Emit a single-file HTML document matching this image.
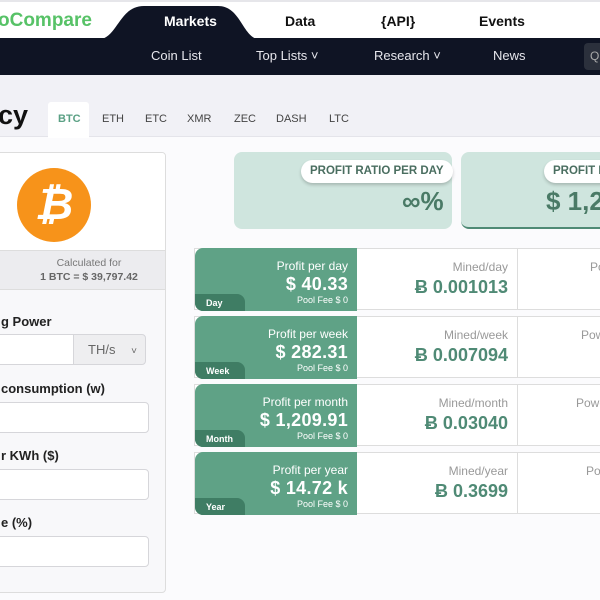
<!DOCTYPE html>
<html><head><meta charset="utf-8"><style>
*{box-sizing:border-box;margin:0;padding:0}
body{width:600px;height:600px;overflow:hidden;position:relative;background:#fbfbfd;font-family:"Liberation Sans",sans-serif}
.a{position:absolute;white-space:nowrap}
.top{left:0;top:0;width:600px;height:40px;background:#fff;border-top:2px solid #e6e6ea}
.nav{left:0;top:38px;width:600px;height:37px;background:#0f1424}
.navt{color:#fff;font-weight:bold;font-size:14px;top:13px}
.sub{color:#e6e6ec;font-size:13px;top:48px}
.gray{left:0;top:75px;width:600px;height:62px;background:#f1f1f6;border-bottom:1px solid #e4e4ea}
.tab{top:113px;font-size:11px;color:#444}
.card{left:-5px;top:152px;width:171px;height:441px;border:1px solid #ddd;border-radius:4px;background:#f8f8fa;overflow:hidden}
.lbl{font-weight:bold;font-size:13px;color:#222}
.inp{background:#fff;border:1px solid #d6d6da;border-radius:4px;height:31px}
.tc{top:152px;height:77px;background:#cfe5de;border-radius:8px}
.pill{background:#fff;border-radius:12px;box-shadow:0 2px 3px rgba(0,0,0,.2);font-weight:bold;font-size:11.5px;color:#4a6e60;padding:5px 9px;height:23px}
.row{left:194px;width:420px;height:62px;background:#fff;border:1px solid #ddd}
.g{left:0;top:-1px;width:162px;height:63px;background:#5fa286;border-radius:8px 0 0 8px;color:#fff;text-align:right;padding-right:9px}
.g .t{font-size:12px;margin-top:11px}
.g .v{font-size:18px;font-weight:bold;margin-top:1px;letter-spacing:.3px}
.g .f{font-size:9px;margin-top:0}
.tag{left:0;bottom:0;width:50px;height:17px;background:#3f7d64;border-radius:0 8px 0 8px;font-size:9px;font-weight:bold;padding:4px 0 0 11px;text-align:left}
.c2{left:162px;top:0;width:161px;height:60px;border-right:1px solid #ddd;text-align:right;padding-right:9px}
.c2 .t{font-size:12px;color:#999;margin-top:11px}
.c2 .v{font-size:18px;font-weight:bold;color:#4f8a75;margin-top:3px}
.c3{left:323px;top:11px;font-size:12px;color:#999}
</style></head><body>
<div class="a top"></div>
<div class="a" style="left:-2px;top:10px;font-size:19px;font-weight:bold;color:#57c267">oCompare</div>
<div class="a nav"></div>
<svg class="a" style="left:96px;top:4px" width="170" height="36"><path d="M0 36 C22 36 22 2 48 2 L122 2 C146 2 146 36 166 36 Z" fill="#0f1424"/></svg>
<div class="a navt" style="left:164px">Markets</div>
<div class="a navt" style="left:285px;color:#111">Data</div>
<div class="a navt" style="left:381px;color:#111">{API}</div>
<div class="a navt" style="left:479px;color:#111">Events</div>
<div class="a sub" style="left:151px">Coin List</div>
<div class="a sub" style="left:256px">Top Lists ˅</div>
<div class="a sub" style="left:374px">Research ˅</div>
<div class="a sub" style="left:493px">News</div>
<div class="a" style="left:584px;top:43px;width:30px;height:27px;background:#2b303c;border-radius:4px;color:#aaa;font-size:12px;padding:6px 0 0 6px">Q</div>
<div class="a gray"></div>
<div class="a" style="left:-2px;top:100px;font-size:27px;font-weight:bold;color:#111">cy</div>
<div class="a" style="left:48px;top:102px;width:41px;height:36px;background:#fff;border-radius:3px 3px 0 0"></div>
<div class="a tab" style="left:58px;color:#5aa084;font-weight:bold">BTC</div>
<div class="a tab" style="left:102px">ETH</div>
<div class="a tab" style="left:145px">ETC</div>
<div class="a tab" style="left:187px">XMR</div>
<div class="a tab" style="left:234px">ZEC</div>
<div class="a tab" style="left:276px">DASH</div>
<div class="a tab" style="left:329px">LTC</div>

<div class="a card">
 <div class="a" style="left:0;top:0;width:171px;height:98px;background:#fff;border-bottom:1px solid #ddd"></div>
 <div class="a" style="left:21px;top:15px;width:74px;height:74px;border-radius:50%;background:#f7931a;color:#fff;font-size:44px;font-weight:bold;text-align:center;line-height:74px;font-style:italic">₿</div>
 <div class="a" style="left:0;top:98px;width:171px;height:39px;background:#ececef;border-bottom:1px solid #ddd;text-align:center;font-size:10.5px;color:#777;padding:5px 0 0 15px;line-height:14px">Calculated for<br><b style="color:#666">1 BTC = $ 39,797.42</b></div>
 <div class="a lbl" style="left:5px;top:161px">g Power</div>
 <div class="a inp" style="left:-5px;top:181px;width:83px;border-radius:0"></div>
 <div class="a" style="left:77px;top:181px;width:73px;height:31px;background:#eeeef0;border:1px solid #d6d6da;border-radius:0 4px 4px 0;font-size:13px;color:#666;padding:7px 0 0 14px">TH/s <span style="margin-left:12px;font-size:10px">˅</span></div>
 <div class="a lbl" style="left:5px;top:228px">consumption (w)</div>
 <div class="a inp" style="left:-5px;top:249px;width:158px"></div>
 <div class="a lbl" style="left:5px;top:295px">r KWh ($)</div>
 <div class="a inp" style="left:-5px;top:316px;width:158px"></div>
 <div class="a lbl" style="left:5px;top:362px">e (%)</div>
 <div class="a inp" style="left:-5px;top:383px;width:158px"></div>
</div>

<div class="a tc" style="left:234px;width:218px"></div>
<div class="a pill" style="left:301px;top:160px">PROFIT RATIO PER DAY</div>
<div class="a" style="left:402px;top:186px;font-size:26px;font-weight:bold;color:#4a7a66">∞%</div>
<div class="a tc" style="left:461px;width:160px;border-bottom:2px solid #4f8a75"></div>
<div class="a pill" style="left:544px;top:160px;width:80px">PROFIT P</div>
<div class="a" style="left:546px;top:186px;font-size:26px;font-weight:bold;color:#4a7a66">$ 1,2</div>

<div class="a row" style="top:248px"><div class="a g"><div class="t">Profit per day</div><div class="v">$ 40.33</div><div class="f">Pool Fee $ 0</div><div class="a tag">Day</div></div><div class="a c2"><div class="t">Mined/day</div><div class="v">Ƀ 0.001013</div></div><div class="a c3" style="left:395px">Po</div></div>
<div class="a row" style="top:316px"><div class="a g"><div class="t">Profit per week</div><div class="v">$ 282.31</div><div class="f">Pool Fee $ 0</div><div class="a tag">Week</div></div><div class="a c2"><div class="t">Mined/week</div><div class="v">Ƀ 0.007094</div></div><div class="a c3" style="left:386px">Pow</div></div>
<div class="a row" style="top:384px"><div class="a g"><div class="t">Profit per month</div><div class="v">$ 1,209.91</div><div class="f">Pool Fee $ 0</div><div class="a tag">Month</div></div><div class="a c2"><div class="t">Mined/month</div><div class="v">Ƀ 0.03040</div></div><div class="a c3" style="left:381px">Powe</div></div>
<div class="a row" style="top:452px"><div class="a g"><div class="t">Profit per year</div><div class="v">$ 14.72 k</div><div class="f">Pool Fee $ 0</div><div class="a tag">Year</div></div><div class="a c2"><div class="t">Mined/year</div><div class="v">Ƀ 0.3699</div></div><div class="a c3" style="left:391px">Po</div></div>
</body></html>
